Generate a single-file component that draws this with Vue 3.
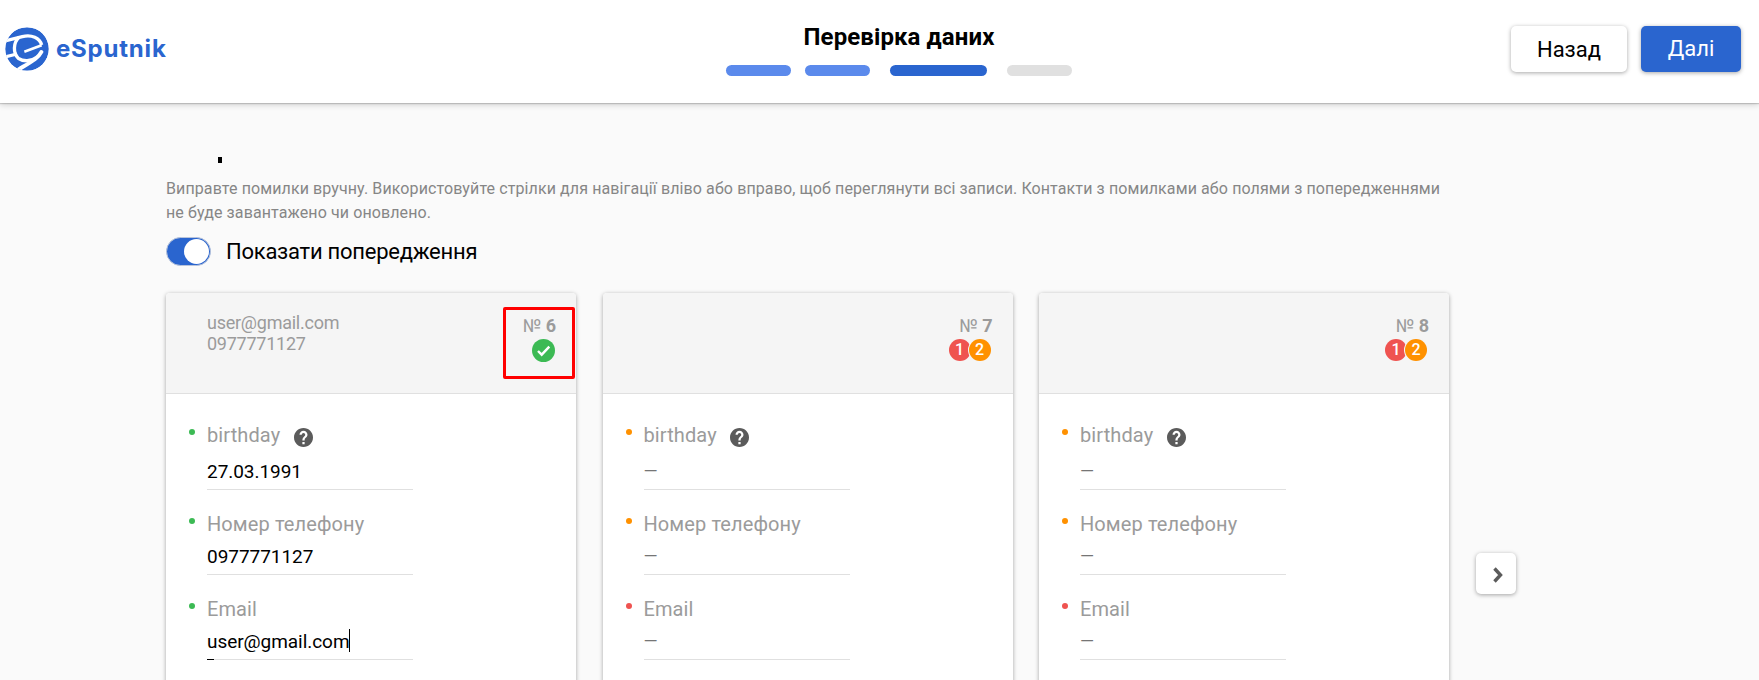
<script setup>
const steps = ['done', 'done', 'active', 'next']

const makeFields = (birthday, phone, email, statuses) => [
  { label: 'birthday', value: birthday, status: statuses[0], help: true },
  { label: 'Номер телефону', value: phone, status: statuses[1] },
  { label: 'Email', value: email, status: statuses[2], focused: Boolean(email) }
]

const contacts = [
  {
    number: 6,
    email: 'user@gmail.com',
    phone: '0977771127',
    errors: 0,
    warnings: 0,
    highlighted: true,
    fields: makeFields('27.03.1991', '0977771127', 'user@gmail.com', ['ok', 'ok', 'ok'])
  },
  {
    number: 7,
    errors: 1,
    warnings: 2,
    fields: makeFields('', '', '', ['warning', 'warning', 'error'])
  },
  {
    number: 8,
    errors: 1,
    warnings: 2,
    fields: makeFields('', '', '', ['warning', 'warning', 'error'])
  }
]
</script>

<template>
  <div class="page">
    <header class="header">
      <div class="logo">
        <svg class="logo-mark" viewBox="0 0 132 132">
          <defs>
            <clipPath id="logo-clip"><circle cx="66" cy="66" r="65.5" /></clipPath>
          </defs>
          <g clip-path="url(#logo-clip)">
            <circle cx="66" cy="66" r="65.5" fill="#2a65cf" />
            <g fill="none" stroke="#fff" stroke-width="10">
              <path d="M0 42 L52 29 C80 22 104 33 110 54" />
              <path d="M110 55 L58 74" stroke-width="8" />
              <path d="M42 31 C24 48 24 78 40 94 C54 104 78 104 94 92" />
              <path d="M0 90 L36 81" />
              <path d="M109 75 C100 94 76 106 40 128" stroke-width="12" stroke-linecap="round" />
            </g>
          </g>
        </svg>
        <span class="logo-text">eSputnik</span>
      </div>

      <div class="progress">
        <h1 class="progress-title">Перевірка даних</h1>
        <div class="steps">
          <span v-for="(step, i) in steps" :key="i" class="step" :class="step"></span>
        </div>
      </div>

      <div class="header-actions">
        <button class="btn btn-back">Назад</button>
        <button class="btn btn-next">Далі</button>
      </div>
    </header>

    <main class="content">
      <div class="heading-rest"></div>
      <p class="hint">
        Виправте помилки вручну. Використовуйте стрілки для навігації вліво або вправо, щоб переглянути всі записи. Контакти з помилками або полями з попередженнями<br />
        не буде завантажено чи оновлено.
      </p>

      <div class="switch-row">
        <span class="switch"><span class="knob"></span></span>
        <span class="switch-label">Показати попередження</span>
      </div>

      <div class="carousel">
        <section v-for="contact in contacts" :key="contact.number" class="card">
          <div class="card-header">
            <div class="contact">
              <div>{{ contact.email }}</div>
              <div>{{ contact.phone }}</div>
            </div>
            <div class="summary">
              <div class="number">№ <b>{{ contact.number }}</b></div>
              <div class="badges">
                <template v-if="contact.errors || contact.warnings">
                  <span class="badge error">{{ contact.errors }}</span>
                  <span class="badge warning">{{ contact.warnings }}</span>
                </template>
                <svg v-else class="check" viewBox="0 0 23 23">
                  <circle cx="11.5" cy="11.5" r="11.5" fill="#3cba54" />
                  <path d="M6 12 L9.7 15.7 L17.3 7.7" fill="none" stroke="#fff" stroke-width="2.4" />
                </svg>
              </div>
            </div>
            <div v-if="contact.highlighted" class="highlight"></div>
          </div>

          <div class="card-body">
            <div v-for="field in contact.fields" :key="field.label" class="field">
              <div class="field-label" :class="{ tall: field.help }">
                <span class="dot" :class="field.status"></span>
                <span class="label-text">{{ field.label }}</span>
                <svg v-if="field.help" class="help" viewBox="2 2 20 20">
                  <path
                    fill="#5b5b5b"
                    stroke="none"
                    d="M12 2C6.48 2 2 6.48 2 12s4.48 10 10 10 10-4.48 10-10S17.52 2 12 2zm1.2 17h-2.4v-2.2h2.4v2.2zm2.07-7.55l-.9.92C13.55 13 13.2 13.7 13.2 15.2h-2.4v-.7c0-1.1.45-2.1 1.17-2.83l1.24-1.26c.37-.36.59-.86.59-1.41 0-1-.8-1.8-1.8-1.8s-1.8.8-1.8 1.8H7.8c0-2.31 1.89-4.2 4.2-4.2s4.2 1.89 4.2 4.2c0 .92-.36 1.78-.93 2.45z"
                  />
                </svg>
              </div>
              <div class="field-value" :class="{ focused: field.focused }">
                <span v-if="field.value">{{ field.value }}</span>
                <span v-else class="empty">—</span>
                <span v-if="field.focused" class="caret"></span>
              </div>
            </div>
          </div>
        </section>

        <button class="next-arrow">
          <svg viewBox="0 0 10 16">
            <path d="M1.5 1.5 L7.5 8 L1.5 14.5" fill="none" stroke="#5b5b5b" stroke-width="3.4" />
          </svg>
        </button>
      </div>
    </main>
  </div>
</template>

<style>
body {
  margin: 0;
  overflow: hidden;
}
</style>

<style scoped>
.page {
  height: 680px;
  overflow: hidden;
  background: #fafafa;
  color: #000;
  font-family: Roboto, sans-serif;
}

.header {
  display: grid;
  grid-template-columns: 721px 346px 1fr;
  box-sizing: border-box;
  height: 103px;
  padding: 0 18px 0 5px;
  background: #fff;
  box-shadow: 0 1px 1px rgba(0, 0, 0, 0.16), 0 2px 6px rgba(0, 0, 0, 0.16);
}

.logo {
  display: flex;
  align-items: center;
  gap: 7px;
  height: 98px;
}

.logo-mark {
  width: 44px;
  height: 44px;
}

.logo-text {
  margin-top: -2px;
  color: #2a65cf;
  font-family: Inter, sans-serif;
  font-size: 24px;
  font-weight: 700;
  letter-spacing: 0.8px;
}

.progress-title {
  margin: 23px 0 0;
  font-size: 24px;
  font-weight: 700;
  letter-spacing: 0.1px;
  line-height: 28px;
  text-align: center;
}

.steps {
  display: flex;
  margin-top: 14px;
}

.step {
  width: 65px;
  height: 11px;
  margin-right: 14px;
  border-radius: 6px;
  background: #e0e0e0;
}

.step.done {
  background: #5b8aec;
}

.step.active {
  width: 97px;
  margin: 0 20px 0 6px;
  background: #2a65cf;
}

.step.next {
  margin-right: 0;
}

.header-actions {
  display: flex;
  justify-content: flex-end;
  gap: 14px;
  padding-top: 26px;
}

.btn {
  height: 46px;
  padding: 0;
  border: 0;
  border-radius: 5px;
  font-family: inherit;
  font-size: 22px;
  box-shadow: 0 1px 4px rgba(0, 0, 0, 0.35);
}

.btn-back {
  width: 116px;
  background: #fff;
  color: #000;
}

.btn-next {
  width: 100px;
  padding-bottom: 2px;
  background: #2a65cf;
  color: #fff;
}

.content {
  padding-left: 166px;
}

.heading-rest {
  width: 4px;
  height: 6px;
  margin: 54px 0 0 52px;
  background: #000;
}

.hint {
  margin: 14px 0 0;
  color: #868686;
  font-size: 16px;
  letter-spacing: 0.105px;
  line-height: 24px;
  white-space: nowrap;
}

.switch-row {
  display: flex;
  align-items: center;
  height: 28px;
  margin-top: 12px;
}

.switch {
  display: flex;
  justify-content: flex-end;
  box-sizing: border-box;
  width: 45px;
  height: 29px;
  padding: 1px;
  border: 1px solid #b9c4da;
  border-radius: 15px;
  background: #2a65cf;
}

.knob {
  width: 25px;
  height: 25px;
  border-radius: 50%;
  background: #fff;
}

.switch-label {
  margin-left: 15px;
  font-size: 22px;
  letter-spacing: -0.25px;
}

.carousel {
  display: flex;
  align-items: flex-start;
  gap: 26.5px;
  margin-top: 28px;
}

.card {
  flex: none;
  width: 410px;
  height: 420px;
  border-radius: 4px;
  background: #fff;
  box-shadow: 0 1px 4px rgba(0, 0, 0, 0.35);
}

.card-header {
  position: relative;
  display: flex;
  justify-content: space-between;
  box-sizing: border-box;
  height: 101px;
  padding: 19px 20px 0 41px;
  border-bottom: 1px solid #e0e0e0;
  border-radius: 4px 4px 0 0;
  background: #f5f5f5;
  color: #9b9b9b;
}

.contact {
  font-size: 18px;
  letter-spacing: -0.25px;
  line-height: 21px;
}

.summary {
  padding-top: 3px;
}

.number {
  font-size: 18px;
  line-height: 22px;
  text-align: right;
}

.number b {
  font-weight: 700;
}

.badges {
  display: flex;
  justify-content: flex-end;
  margin: 2px 1px 0 0;
}

.badge {
  width: 22px;
  height: 22px;
  border-radius: 50%;
  color: #fff;
  font-size: 16px;
  font-weight: 500;
  line-height: 22px;
  text-align: center;
}

.badge.warning {
  margin: 0 1px 0 -2px;
  box-shadow: 0 0 0 1px #f5f5f5;
}

.check {
  width: 23px;
  height: 23px;
}

.highlight {
  position: absolute;
  top: 13.5px;
  right: 1px;
  box-sizing: border-box;
  width: 72px;
  height: 72px;
  border: 3px solid #f00;
  border-radius: 2px;
}

.card-body {
  padding: 7px 0 0 41px;
}

.field {
  width: 206px;
  padding-top: 22px;
}

.field-label {
  position: relative;
  display: flex;
  height: 24px;
  color: #9b9b9b;
  font-size: 20px;
  letter-spacing: 0.1px;
  line-height: 24px;
}

.field-label.tall {
  height: 28px;
}

.dot {
  position: absolute;
  top: 6px;
  left: -18px;
  width: 6px;
  height: 6px;
  border-radius: 50%;
}

.ok {
  background: #3cba54;
}

.warning {
  background: #ff9100;
}

.error {
  background: #ef5350;
}

.help {
  width: 19px;
  height: 19px;
  margin: 5px 0 0 13.5px;
}

.field-value {
  position: relative;
  display: flex;
  height: 24px;
  padding: 9px 0 5px;
  border-bottom: 1px solid #e0e0e0;
  font-size: 19px;
  letter-spacing: -0.05px;
  line-height: 24px;
}

.field-value.focused::after {
  content: '';
  position: absolute;
  bottom: -1px;
  left: 0;
  width: 7px;
  height: 1px;
  background: #000;
}

.caret {
  width: 1px;
  height: 23px;
  margin: -1px 0 0 -1px;
  background: #000;
}

.empty {
  color: #757575;
  font-size: 18px;
  line-height: 22px;
}

.next-arrow {
  display: flex;
  align-items: center;
  justify-content: center;
  width: 40px;
  height: 41px;
  margin-top: 260px;
  padding: 0;
  border: 0;
  border-radius: 5px;
  background: #fff;
  box-shadow: 0 1px 4px rgba(0, 0, 0, 0.35);
}

.next-arrow svg {
  width: 10px;
  height: 16px;
  margin: 2px 0 0 4px;
}
</style>
